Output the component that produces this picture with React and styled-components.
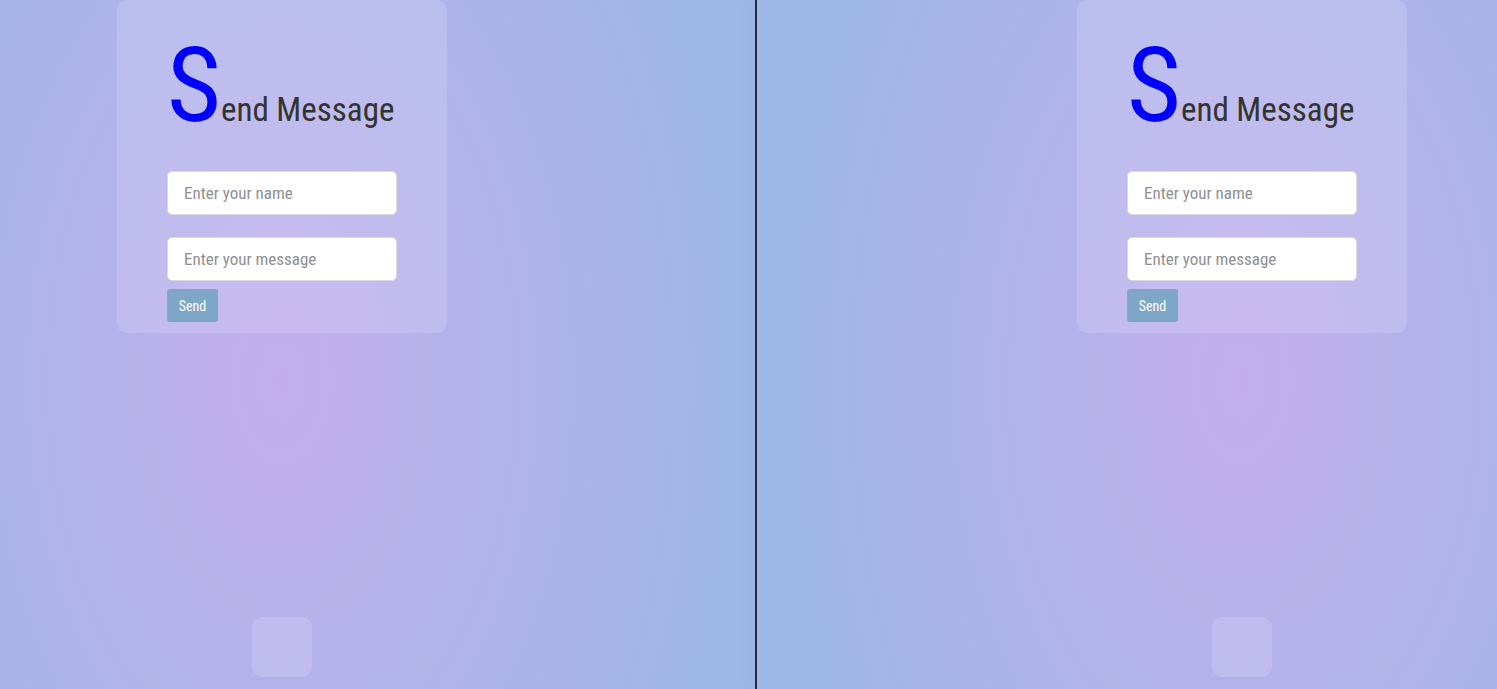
import React from 'react';
import styled, { createGlobalStyle } from 'styled-components';

const GlobalStyle = createGlobalStyle`
  html, body, #root {
    margin: 0;
    padding: 0;
    height: 100%;
    overflow: hidden;
  }
  body {
    font-family: Roboto, "Liberation Sans", Arial, sans-serif;
    font-stretch: condensed;
  }
`;

const Screen = styled.div`
  display: flex;
  width: 100vw;
  height: 100vh;
  background: #9db7e6;
`;

// each half shows a 960px wide copy of the page, clipped
const Frame = styled.div`
  flex: ${props => (props.grow ? '1 1 auto' : `0 0 ${props.width}px`)};
  height: 100%;
  overflow: hidden;
  display: flex;
`;

const Divider = styled.div`
  flex: 0 0 2px;
  height: 100%;
  background: #262a3d;
  box-shadow: -6px 0 10px rgba(70, 80, 140, 0.12);
`;

const Page = styled.div`
  flex: 0 0 960px;
  margin-left: ${props => props.offset}px;
  height: 100%;
  display: flex;
  flex-direction: column;
  align-items: center;
  justify-content: space-between;
  background: radial-gradient(
    ellipse 470px 780px at 50% 380px,
    #c2adec 0%,
    #b2b3ea 45%,
    #9db7e6 100%
  );
`;

const Card = styled.div`
  width: 330px;
  box-sizing: border-box;
  padding: 34px 50px 11px;
  border-radius: 10px;
  background: rgba(255, 255, 255, 0.15);
  display: flex;
  flex-direction: column;
`;

const Title = styled.h1`
  margin: 0 0 33px;
  display: flex;
  align-items: baseline;
  line-height: 1;
  font-weight: normal;
  font-size: 33px;
  color: #333;
  white-space: nowrap;
`;

const BigLetter = styled.span`
  font-size: 104px;
  color: #0000ff;
`;

const Input = styled.input`
  width: 230px;
  height: 44px;
  box-sizing: border-box;
  margin-bottom: ${props => props.gap}px;
  padding: 0 16px;
  border: 1px solid #d9d9de;
  border-radius: 5px;
  background: #fff;
  font-family: inherit;
  font-stretch: condensed;
  font-size: 17px;
  color: #333;
  outline: none;

  &::placeholder {
    color: #8f8f94;
  }
`;

const SendButton = styled.button`
  width: 51px;
  height: 33px;
  border: none;
  border-radius: 3px;
  background: #7ea6c6;
  color: #fff;
  font-family: inherit;
  font-stretch: condensed;
  font-size: 14px;
  cursor: pointer;
`;

const Dock = styled.div`
  width: 60px;
  height: 60px;
  margin-bottom: 12px;
  border-radius: 10px;
  background: rgba(255, 255, 255, 0.15);
`;

function MessagePage({ offset }) {
  return (
    <Page offset={offset}>
      <Card>
        <Title>
          <BigLetter>S</BigLetter>end Message
        </Title>
        <Input type="text" placeholder="Enter your name" gap={22} />
        <Input type="text" placeholder="Enter your message" gap={8} />
        <div>
          <SendButton>Send</SendButton>
        </div>
      </Card>
      <Dock />
    </Page>
  );
}

export default function App() {
  return (
    <>
      <GlobalStyle />
      <Screen>
        <Frame width={755}>
          <MessagePage offset={-198} />
        </Frame>
        <Divider />
        <Frame grow>
          <MessagePage offset={5} />
        </Frame>
      </Screen>
    </>
  );
}
